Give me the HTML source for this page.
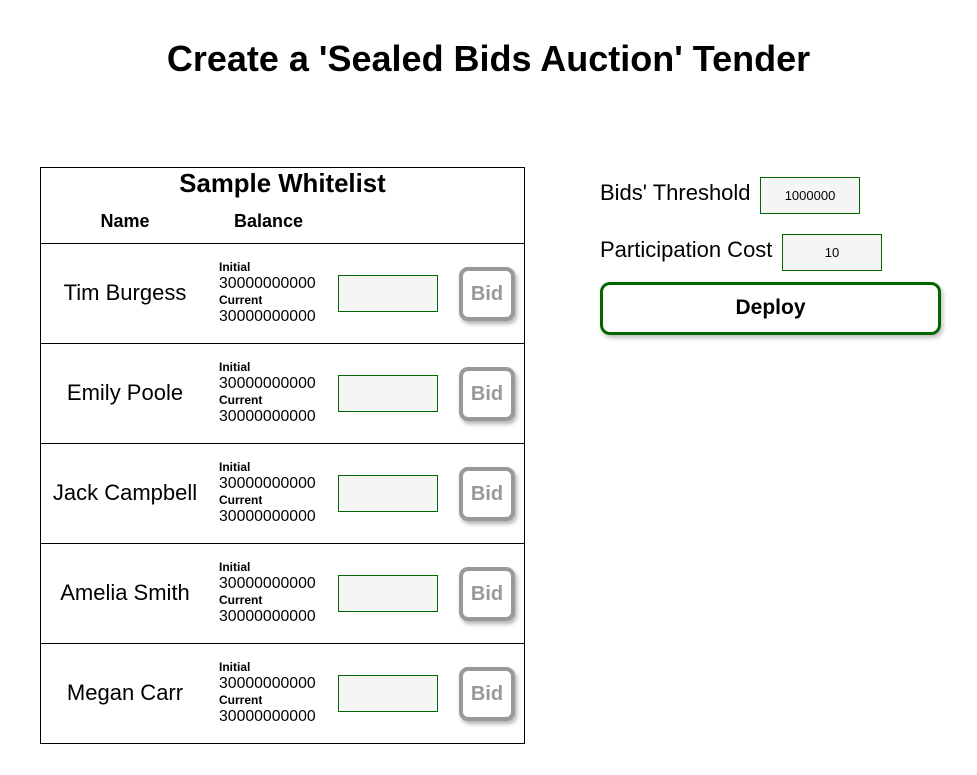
<!DOCTYPE html>
<html><head><style>
*{box-sizing:border-box;margin:0;padding:0}
body{width:977px;height:775px;background:#fff;font-family:"Liberation Sans",sans-serif;position:relative;color:#000;overflow:hidden}
.a{position:absolute}
h1{position:absolute;left:0;width:977px;top:38px;text-align:center;font-size:36px;font-weight:bold}
.tbl{position:absolute;left:40px;top:167px;width:485px;height:577px;border:1px solid #000}
.hr{position:absolute;left:0;width:483px;border-top:1px solid #000}
.nm{position:absolute;left:0;width:168px;text-align:center;font-size:22px}
.bal{position:absolute;left:178px;font-size:15.8px;line-height:16px}
.bal b{font-size:12px;display:block;line-height:17px}
.inp{position:absolute;left:297px;width:100px;height:37px;background:#f5f5f5;border:1px solid #060}
.bid{position:absolute;left:418px;width:56px;height:54px;border:4px solid #999;border-radius:9px;background:#fff;color:#999;font-weight:bold;font-size:20px;text-align:center;line-height:46px;box-shadow:2px 3px 4px rgba(0,0,0,.3)}
.lbl{position:absolute;left:600px;font-size:22px}
.rin{position:absolute;height:37px;width:100px;background:#f5f5f5;border:1px solid #060;text-align:center;font-size:13px;line-height:35px}
</style></head><body>
<h1>Create a 'Sealed Bids Auction' Tender</h1>
<div class="tbl">
<div class="a" style="left:0;width:483px;top:2px;text-align:center;font-size:25.8px;font-weight:bold">Sample Whitelist</div>
<div class="a" style="left:0;width:168px;top:43px;text-align:center;font-size:18px;font-weight:bold">Name</div>
<div class="a" style="left:193px;top:43px;font-size:18px;font-weight:bold">Balance</div>
<div class="hr" style="top:75px"></div>
<div class="nm" style="top:112px">Tim Burgess</div>
<div class="bal" style="top:91px"><b>Initial</b>30000000000<b>Current</b>30000000000</div>
<div class="inp" style="top:107px"></div><div class="bid" style="top:99px">Bid</div>
<div class="hr" style="top:175px"></div>
<div class="nm" style="top:212px">Emily Poole</div>
<div class="bal" style="top:191px"><b>Initial</b>30000000000<b>Current</b>30000000000</div>
<div class="inp" style="top:207px"></div><div class="bid" style="top:199px">Bid</div>
<div class="hr" style="top:275px"></div>
<div class="nm" style="top:312px">Jack Campbell</div>
<div class="bal" style="top:291px"><b>Initial</b>30000000000<b>Current</b>30000000000</div>
<div class="inp" style="top:307px"></div><div class="bid" style="top:299px">Bid</div>
<div class="hr" style="top:375px"></div>
<div class="nm" style="top:412px">Amelia Smith</div>
<div class="bal" style="top:391px"><b>Initial</b>30000000000<b>Current</b>30000000000</div>
<div class="inp" style="top:407px"></div><div class="bid" style="top:399px">Bid</div>
<div class="hr" style="top:475px"></div>
<div class="nm" style="top:512px">Megan Carr</div>
<div class="bal" style="top:491px"><b>Initial</b>30000000000<b>Current</b>30000000000</div>
<div class="inp" style="top:507px"></div><div class="bid" style="top:499px">Bid</div>
</div>
<div class="lbl" style="top:180px">Bids' Threshold</div>
<div class="rin" style="left:760px;top:177px">1000000</div>
<div class="lbl" style="top:237px">Participation Cost</div>
<div class="rin" style="left:782px;top:234px">10</div>
<div class="a" style="left:600px;top:282px;width:341px;height:53px;border:3px solid #060;border-radius:10px;text-align:center;font-size:21px;font-weight:bold;line-height:46px;box-shadow:2px 3px 4px rgba(0,0,0,.25)">Deploy</div>
</body></html>
